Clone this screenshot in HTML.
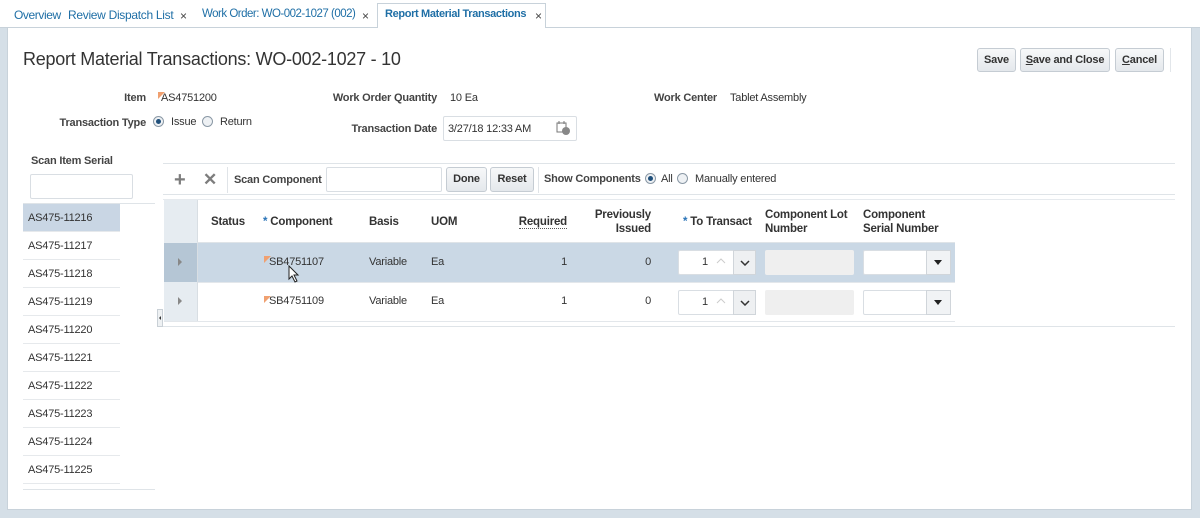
<!DOCTYPE html>
<html><head><style>
*{box-sizing:border-box;margin:0;padding:0}
body{width:1200px;height:518px;background:#d5dfe7;font-family:"Liberation Sans",sans-serif;font-size:11px;letter-spacing:-0.2px;color:#333;position:relative;overflow:hidden}
.a{position:absolute;white-space:nowrap}
.tab{color:#1f6fa6;font-size:12px;top:8px}
.x{color:#444;font-size:12px;top:9px}
.lbl{font-weight:bold;color:#444;text-align:right}
.btn{position:absolute;white-space:nowrap;border:1px solid #c5ccd3;border-radius:3px;background:linear-gradient(#f7f8f9,#e4e8ec);font-weight:bold;color:#333;text-align:center;font-size:11px}
.inp{position:absolute;border:1px solid #d9dee3;background:#fff;border-radius:2px}
.radio{position:absolute;width:11px;height:11px;border-radius:50%;border:1px solid #8a98a5;background:#eef1f4}
.radio.on::after{content:"";position:absolute;left:2px;top:2px;width:5px;height:5px;border-radius:50%;background:#1f4f7a}
.row{position:absolute;left:23px;width:97px;height:28px;border-bottom:1px solid #e6e9ec;padding:8px 0 0 5px;font-size:11px;color:#333}
.hd{position:absolute;font-weight:bold;color:#333;font-size:11.5px;line-height:14px}
.cell{position:absolute;font-size:11px;color:#333}
.star{color:#2a74b8}
.flag{position:absolute;width:0;height:0;border-top:7px solid #f0a070;border-right:7px solid transparent}
</style></head><body>
<div class="a" style="left:0;top:0;width:1200px;height:28px;background:#fff;border-bottom:1px solid #c8d2da"></div>
<div class="a tab" style="left:14px;letter-spacing:-0.4px">Overview</div>
<div class="a tab" style="left:68px;letter-spacing:-0.3px">Review Dispatch List</div>
<div class="a x" style="left:180px">×</div>
<div class="a tab" style="left:202px;font-size:11.5px;letter-spacing:-0.5px">Work Order: WO-002-1027 (002)</div>
<div class="a x" style="left:362px">×</div>
<div class="a" style="left:377px;top:3px;width:169px;height:26px;background:#fff;border:1px solid #c8d2da;border-bottom:none"></div>
<div class="a tab" style="left:385px;font-weight:bold;font-size:11px;letter-spacing:-0.35px">Report Material Transactions</div>
<div class="a x" style="left:535px">×</div>
<div class="a" style="left:7px;top:28px;width:1185px;height:482px;background:#fff;border:1px solid #c8d2da;border-top:none"></div>
<div class="a" style="left:23px;top:49px;font-size:18px;letter-spacing:-0.25px;color:#333">Report Material Transactions: WO-002-1027 - 10</div>
<div class="btn" style="left:977px;top:48px;width:39px;height:24px;line-height:22px">Save</div>
<div class="btn" style="left:1020px;top:48px;width:90px;height:24px;line-height:22px"><u>S</u>ave and Close</div>
<div class="btn" style="left:1115px;top:48px;width:49px;height:24px;line-height:22px"><u>C</u>ancel</div>
<div class="a" style="left:1170px;top:48px;width:1px;height:24px;background:#e2e6ea"></div>
<div class="a lbl" style="left:40px;width:106px;top:92px">Item</div>
<div class="flag" style="left:158px;top:92px"></div>
<div class="a" style="left:161px;top:92px">AS4751200</div>
<div class="a lbl" style="left:300px;width:137px;top:92px">Work Order Quantity</div>
<div class="a" style="left:450px;top:92px">10 Ea</div>
<div class="a lbl" style="left:600px;width:117px;top:92px">Work Center</div>
<div class="a" style="left:730px;top:92px">Tablet Assembly</div>
<div class="a lbl" style="left:40px;width:106px;top:117px">Transaction Type</div>
<div class="radio on" style="left:153px;top:116px"></div>
<div class="a" style="left:171px;top:116px">Issue</div>
<div class="radio" style="left:202px;top:116px"></div>
<div class="a" style="left:220px;top:116px">Return</div>
<div class="a lbl" style="left:300px;width:137px;top:123px">Transaction Date</div>
<div class="inp" style="left:443px;top:116px;width:134px;height:25px"></div>
<div class="a" style="left:448px;top:123px">3/27/18 12:33 AM</div>
<svg class="a" style="left:556px;top:121px" width="14" height="14"><rect x="1" y="2" width="9" height="9" fill="none" stroke="#777"/><line x1="3" y1="0" x2="3" y2="3" stroke="#777"/><line x1="8" y1="0" x2="8" y2="3" stroke="#777"/><circle cx="10" cy="10" r="4" fill="#888"/></svg>
<div class="a lbl" style="left:31px;top:155px;text-align:left">Scan Item Serial</div>
<div class="inp" style="left:30px;top:174px;width:103px;height:25px"></div>
<div class="a" style="left:23px;top:203px;width:132px;height:1px;background:#dfe4e8"></div>
<div class="row" style="top:204px;background:#c9d6e4">AS475-11216</div>
<div class="row" style="top:232px">AS475-11217</div>
<div class="row" style="top:260px">AS475-11218</div>
<div class="row" style="top:288px">AS475-11219</div>
<div class="row" style="top:316px">AS475-11220</div>
<div class="row" style="top:344px">AS475-11221</div>
<div class="row" style="top:372px">AS475-11222</div>
<div class="row" style="top:400px">AS475-11223</div>
<div class="row" style="top:428px">AS475-11224</div>
<div class="row" style="top:456px">AS475-11225</div>
<div class="a" style="left:23px;top:489px;width:132px;height:1px;background:#dfe4e8"></div>
<div class="a" style="left:157px;top:309px;width:6px;height:18px;background:#eef1f3;border:1px solid #c9d0d6"></div>
<div class="a" style="left:159px;top:316px;width:0;height:0;border-top:2px solid transparent;border-bottom:2px solid transparent;border-right:2px solid #333"></div>
<div class="a" style="left:163px;top:163px;width:1012px;height:1px;background:#dfe4e8"></div>
<div class="a" style="left:174px;top:169px;font-size:20px;font-weight:bold;color:#7d7d7d">+</div>
<div class="a" style="left:203px;top:170px;font-size:17px;font-weight:bold;color:#7d7d7d">✕</div>
<div class="a" style="left:227px;top:167px;width:1px;height:26px;background:#e0e4e8"></div>
<div class="a lbl" style="left:234px;top:174px;text-align:left">Scan Component</div>
<div class="inp" style="left:326px;top:167px;width:116px;height:25px"></div>
<div class="btn" style="left:446px;top:167px;width:41px;height:25px;line-height:23px">Done</div>
<div class="btn" style="left:490px;top:167px;width:44px;height:25px;line-height:23px">Reset</div>
<div class="a" style="left:538px;top:167px;width:1px;height:26px;background:#e0e4e8"></div>
<div class="a lbl" style="left:544px;top:173px;text-align:left">Show Components</div>
<div class="radio on" style="left:645px;top:173px"></div>
<div class="a" style="left:661px;top:173px">All</div>
<div class="radio" style="left:677px;top:173px"></div>
<div class="a" style="left:695px;top:173px">Manually entered</div>
<div class="a" style="left:163px;top:194px;width:1012px;height:1px;background:#dfe4e8"></div>
<div class="a" style="left:163px;top:199px;width:1012px;height:1px;background:#e6eaee"></div>
<div class="a" style="left:164px;top:200px;width:33px;height:122px;background:#e6ecf1"></div>
<div class="a" style="left:197px;top:200px;width:1px;height:122px;background:#d8dee3"></div>
<div class="hd" style="left:211px;top:215px">Status</div>
<div class="hd" style="left:263px;top:215px"><span class="star">*</span> Component</div>
<div class="hd" style="left:369px;top:215px">Basis</div>
<div class="hd" style="left:431px;top:215px">UOM</div>
<div class="hd" style="left:500px;top:215px;width:67px;text-align:right"><span style="border-bottom:1px dotted #555">Required</span></div>
<div class="hd" style="left:570px;top:208px;width:81px;text-align:right">Previously<br>Issued</div>
<div class="hd" style="left:683px;top:215px"><span class="star">*</span> To Transact</div>
<div class="hd" style="left:765px;top:208px">Component Lot<br>Number</div>
<div class="hd" style="left:863px;top:208px">Component<br>Serial Number</div>
<div class="a" style="left:197px;top:242px;width:758px;height:1px;background:#dfe4e8"></div>
<div class="a" style="left:164px;top:243px;width:33px;height:39px;background:#b5c6d5"></div>
<div class="a" style="left:198px;top:243px;width:757px;height:39px;background:#cad8e5"></div>
<div class="a" style="left:198px;top:282px;width:757px;height:1px;background:#e3e7eb"></div>
<div class="a" style="left:164px;top:321px;width:791px;height:1px;background:#e3e7eb"></div>
<div class="a" style="left:163px;top:326px;width:1012px;height:1px;background:#dfe4e8"></div>
<div class="a" style="left:178px;top:258px;border-top:4px solid transparent;border-bottom:4px solid transparent;border-left:4px solid #888"></div>
<div class="a" style="left:178px;top:297px;border-top:4px solid transparent;border-bottom:4px solid transparent;border-left:4px solid #888"></div>
<div class="flag" style="left:264px;top:256px"></div>
<div class="cell" style="left:269px;top:256px">SB4751107</div>
<div class="cell" style="left:369px;top:256px">Variable</div>
<div class="cell" style="left:431px;top:256px">Ea</div>
<div class="cell" style="left:500px;top:256px;width:67px;text-align:right">1</div>
<div class="cell" style="left:600px;top:256px;width:51px;text-align:right">0</div>
<div class="flag" style="left:264px;top:296px"></div>
<div class="cell" style="left:269px;top:295px">SB4751109</div>
<div class="cell" style="left:369px;top:295px">Variable</div>
<div class="cell" style="left:431px;top:295px">Ea</div>
<div class="cell" style="left:500px;top:295px;width:67px;text-align:right">1</div>
<div class="cell" style="left:600px;top:295px;width:51px;text-align:right">0</div>
<svg class="a" style="left:288px;top:265px" width="12" height="18"><path d="M1 1 L1 14 L4 11 L7 17 L9 16 L6 10 L10 10 Z" fill="#fff" stroke="#222"/></svg>
<div class="inp" style="left:678px;top:250px;width:78px;height:25px"></div>
<div class="cell" style="left:702px;top:256px">1</div>
<svg class="a" style="left:716px;top:258px" width="10" height="6"><path d="M1 5 L5 1 L9 5" fill="none" stroke="#ccc"/></svg>
<div class="a" style="left:733px;top:250px;width:23px;height:25px;background:#eef0f2;border:1px solid #d0d5da"></div>
<svg class="a" style="left:740px;top:260px" width="10" height="6"><path d="M1 1 L5 5 L9 1" fill="none" stroke="#333" stroke-width="1.5"/></svg>
<div class="a" style="left:765px;top:250px;width:89px;height:25px;background:#efefef;border-radius:2px"></div>
<div class="inp" style="left:863px;top:250px;width:88px;height:25px"></div>
<div class="a" style="left:926px;top:250px;width:25px;height:25px;background:#f1f3f5;border:1px solid #d0d5da"></div>
<div class="a" style="left:934px;top:260px;border-left:4px solid transparent;border-right:4px solid transparent;border-top:5px solid #222"></div>
<div class="inp" style="left:678px;top:290px;width:78px;height:25px"></div>
<div class="cell" style="left:702px;top:296px">1</div>
<svg class="a" style="left:716px;top:298px" width="10" height="6"><path d="M1 5 L5 1 L9 5" fill="none" stroke="#ccc"/></svg>
<div class="a" style="left:733px;top:290px;width:23px;height:25px;background:#eef0f2;border:1px solid #d0d5da"></div>
<svg class="a" style="left:740px;top:300px" width="10" height="6"><path d="M1 1 L5 5 L9 1" fill="none" stroke="#333" stroke-width="1.5"/></svg>
<div class="a" style="left:765px;top:290px;width:89px;height:25px;background:#efefef;border-radius:2px"></div>
<div class="inp" style="left:863px;top:290px;width:88px;height:25px"></div>
<div class="a" style="left:926px;top:290px;width:25px;height:25px;background:#f1f3f5;border:1px solid #d0d5da"></div>
<div class="a" style="left:934px;top:300px;border-left:4px solid transparent;border-right:4px solid transparent;border-top:5px solid #222"></div>
</body></html>
